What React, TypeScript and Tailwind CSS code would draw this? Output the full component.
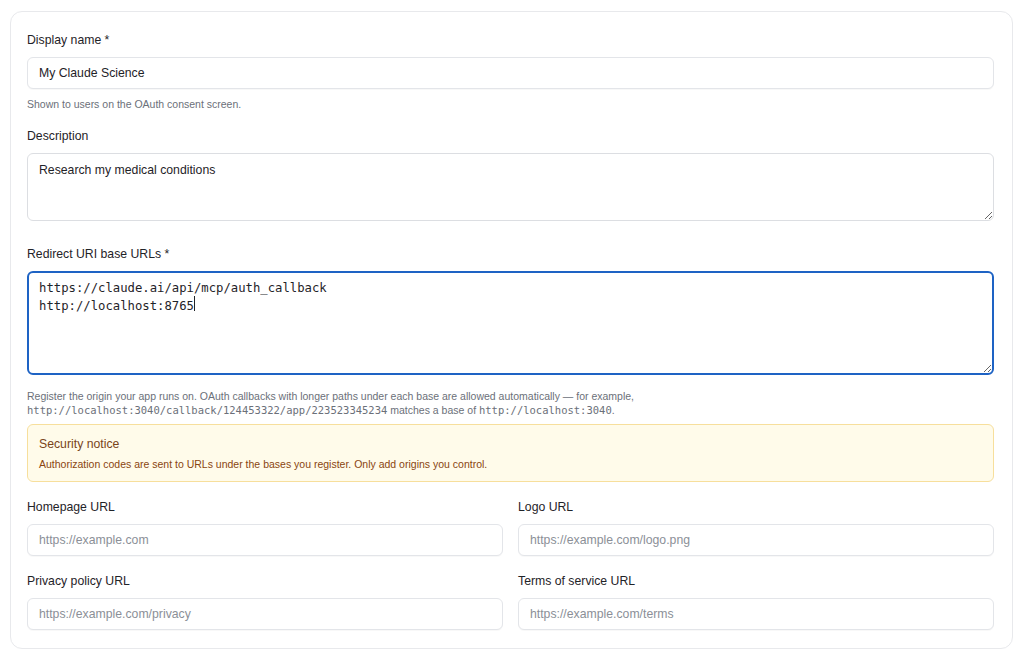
import React from "react";

const sans = "font-['Liberation_Sans',Arial,sans-serif]";
const mono = "font-['DejaVu_Sans_Mono',monospace]";

const inputCls =
  "block w-full h-[32px] rounded-[6px] border border-[#e3e5e9] bg-white px-[11px] text-[12.25px] text-[#1f2328] shadow-[0_1px_1px_rgba(0,0,0,0.03)] outline-none placeholder:text-[#8b8f97]";

function Label({ children }: { children: React.ReactNode }) {
  return <label className="block text-[12.25px] leading-[17px] text-[#1f2328] mb-[8px]">{children}</label>;
}

function Help({ children, className = "" }: { children: React.ReactNode; className?: string }) {
  return <p className={`text-[10.5px] leading-[14px] text-[#6b7079] ${className}`}>{children}</p>;
}

function Field({ label, placeholder }: { label: string; placeholder: string }) {
  return (
    <div>
      <Label>{label}</Label>
      <input className={inputCls} placeholder={placeholder} readOnly />
    </div>
  );
}

export default function App() {
  return (
    <div className={`w-[1024px] h-[662px] bg-white pl-[10px] pt-[11px] ${sans}`}>
      <div className="w-[1003px] rounded-[12px] border border-[#e8e9ec] bg-white pl-[16px] pr-[18px] pt-[20px] pb-[18px]">
        {/* Display name */}
        <Label>Display name *</Label>
        <input className={inputCls} defaultValue="My Claude Science" readOnly />
        <Help className="mt-[8px]">Shown to users on the OAuth consent screen.</Help>

        {/* Description */}
        <div className="mt-[17px]">
          <Label>Description</Label>
          <textarea
            className="block w-full h-[68px] rounded-[6px] border border-[#dcdee2] bg-white px-[11px] pt-[8px] text-[12.25px] leading-[17px] text-[#1f2328] outline-none"
            defaultValue="Research my medical conditions"
            readOnly
          />
        </div>

        {/* Redirect URIs */}
        <div className="mt-[25px]">
          <Label>Redirect URI base URLs *</Label>
          <div className="relative">
            <textarea
              className={`block w-full h-[104px] rounded-[6px] border-2 border-[#1e63c4] bg-white px-[10px] pt-[6px] text-[12.25px] leading-[18px] text-[#1f2328] outline-none ${mono}`}
              defaultValue={"https://claude.ai/api/mcp/auth_callback\nhttp://localhost:8765"}
              readOnly
            />
            <span className="absolute left-[167px] top-[25px] h-[15px] w-px bg-[#1f2328]" />
          </div>
          <Help className="mt-[14px]">
            Register the origin your app runs on. OAuth callbacks with longer paths under each base are allowed
            automatically — for example,
            <br />
            <code className={`${mono} text-[10.5px]`}>http://localhost:3040/callback/124453322/app/223523345234</code>{" "}
            matches a base of <code className={`${mono} text-[10.5px]`}>http://localhost:3040</code>.
          </Help>
        </div>

        {/* Security notice */}
        <div className="mt-[7px] rounded-[6px] border border-[#f7df9c] bg-[#fffbea] px-[11px] pt-[11px] pb-[10px]">
          <p className="text-[12.25px] leading-[17px] text-[#7a4419]">Security notice</p>
          <p className="mt-[4px] text-[10.5px] leading-[14px] text-[#8a4510]">
            Authorization codes are sent to URLs under the bases you register. Only add origins you control.
          </p>
        </div>

        {/* URL fields */}
        <div className="mt-[17px] grid grid-cols-2 gap-x-[15px] gap-y-[17px]">
          <Field label="Homepage URL" placeholder="https://example.com" />
          <Field label="Logo URL" placeholder="https://example.com/logo.png" />
          <Field label="Privacy policy URL" placeholder="https://example.com/privacy" />
          <Field label="Terms of service URL" placeholder="https://example.com/terms" />
        </div>
      </div>
    </div>
  );
}
